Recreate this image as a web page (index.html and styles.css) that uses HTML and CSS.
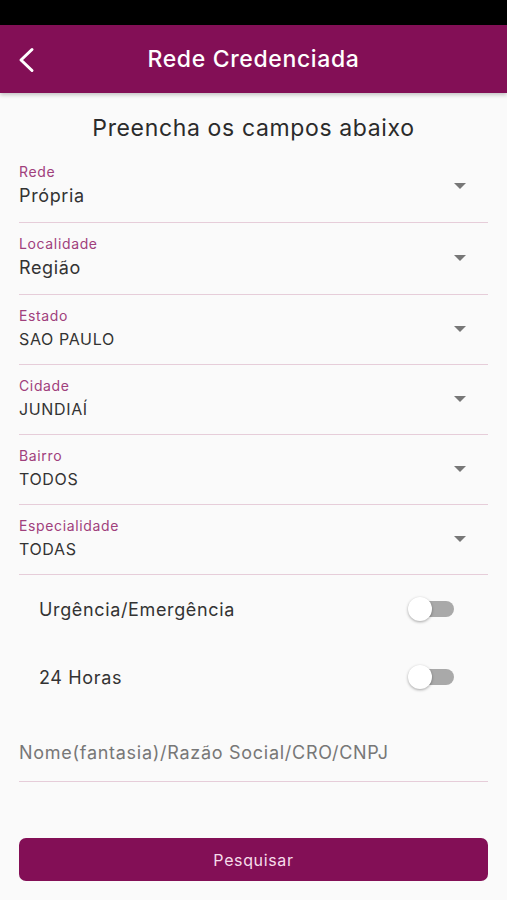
FILE: index.html
```html
<!DOCTYPE html>
<html>
<head>
  <meta charset="utf-8">
  <link rel="stylesheet" href="styles.css">
  <title>Rede Credenciada</title>
</head>
<body>
  <div class="status-bar"></div>
  <div class="app-bar">
    <button class="back-btn" aria-label="Voltar">
      <svg width="18" height="26" viewBox="0 0 18 26">
        <path d="M15 2.5 L4 13 L15 23.5" fill="none" stroke="#fff" stroke-width="3" stroke-linecap="round" stroke-linejoin="round"/>
      </svg>
    </button>
    <h1>Rede Credenciada</h1>
  </div>

  <div class="content">
    <h2 class="form-title">Preencha os campos abaixo</h2>

    <div class="select-field">
      <div class="select-text">
        <span class="field-label">Rede</span>
        <span class="field-value large">Própria</span>
      </div>
      <span class="select-arrow"></span>
    </div>

    <div class="select-field">
      <div class="select-text">
        <span class="field-label">Localidade</span>
        <span class="field-value large">Região</span>
      </div>
      <span class="select-arrow"></span>
    </div>

    <div class="select-field">
      <div class="select-text">
        <span class="field-label">Estado</span>
        <span class="field-value">SAO PAULO</span>
      </div>
      <span class="select-arrow"></span>
    </div>

    <div class="select-field">
      <div class="select-text">
        <span class="field-label">Cidade</span>
        <span class="field-value">JUNDIAÍ</span>
      </div>
      <span class="select-arrow"></span>
    </div>

    <div class="select-field">
      <div class="select-text">
        <span class="field-label">Bairro</span>
        <span class="field-value">TODOS</span>
      </div>
      <span class="select-arrow"></span>
    </div>

    <div class="select-field">
      <div class="select-text">
        <span class="field-label">Especialidade</span>
        <span class="field-value">TODAS</span>
      </div>
      <span class="select-arrow"></span>
    </div>

    <div class="switch-row">
      <span>Urgência/Emergência</span>
      <span class="switch"><span class="switch-track"></span><span class="switch-thumb"></span></span>
    </div>

    <div class="switch-row">
      <span>24 Horas</span>
      <span class="switch"><span class="switch-track"></span><span class="switch-thumb"></span></span>
    </div>

    <div class="text-field">
      <input type="text" placeholder="Nome(fantasia)/Razão Social/CRO/CNPJ">
    </div>

    <button class="search-btn">Pesquisar</button>
  </div>
</body>
</html>
```

FILE: styles.css
```css
body {
  margin: 0;
  padding: 0;
  background-color: #fafafa;
  font-family: Inter, "Noto Sans", sans-serif;
  letter-spacing: 0.04em;
  color: #333;
}

.status-bar {
  height: 25px;
  background-color: #000;
}

.app-bar {
  position: relative;
  display: flex;
  align-items: center;
  justify-content: center;
  height: 68px;
  background-color: #830f56;
  box-shadow: 0 2px 4px rgba(0, 0, 0, 0.22);
}

.app-bar h1 {
  margin: 0;
  color: #fff;
  font-size: 23px;
  font-weight: 500;
}

.back-btn {
  position: absolute;
  left: 17px;
  top: 22px;
  padding: 0;
  background: none;
  border: none;
  display: flex;
  cursor: pointer;
}

.content {
  padding: 0 19px;
}

.form-title {
  margin: 20px 0 8px;
  text-align: center;
  font-size: 23px;
  line-height: 30px;
  font-weight: 400;
  color: #2b2b2b;
}

.select-field {
  display: flex;
  align-items: center;
  padding: 13px 22px 14px 0;
  border-bottom: 1px solid #e6cdd9;
}

.select-text {
  flex: 1;
  display: flex;
  flex-direction: column;
}

.field-label {
  font-size: 14px;
  line-height: 16px;
  color: #a0407c;
}

.field-value {
  margin-top: 4px;
  font-size: 16px;
  line-height: 22px;
  color: #333;
}

.field-value.large {
  font-size: 18px;
  line-height: 24px;
}

.select-arrow {
  width: 0;
  height: 0;
  border-left: 6px solid transparent;
  border-right: 6px solid transparent;
  border-top: 6px solid #777;
}

.switch-row {
  display: flex;
  align-items: center;
  justify-content: space-between;
  height: 68px;
  padding: 0 34px 0 20px;
  font-size: 18px;
  color: #333;
}

.switch {
  position: relative;
  width: 46px;
  height: 24px;
}

.switch-track {
  position: absolute;
  right: 0;
  top: 4px;
  width: 40px;
  height: 16px;
  border-radius: 8px;
  background-color: #a9a9a9;
}

.switch-thumb {
  position: absolute;
  left: 0;
  top: 0;
  width: 24px;
  height: 24px;
  border-radius: 50%;
  background-color: #fff;
  box-shadow: 0 1px 3px rgba(0, 0, 0, 0.35);
}

.text-field {
  padding: 30px 0 16px;
  border-bottom: 1px solid #e6cdd9;
}

.text-field input {
  width: 100%;
  padding: 0;
  border: none;
  background: none;
  outline: none;
  font-family: Inter, "Noto Sans", sans-serif;
  letter-spacing: 0.04em;
  font-size: 18px;
  line-height: 24px;
  height: 24px;
  color: #333;
}

.text-field input::placeholder {
  color: #777;
}

.search-btn {
  display: block;
  width: 100%;
  height: 43px;
  margin-top: 56px;
  border: none;
  border-radius: 7px;
  background-color: #830f56;
  color: #f6dcea;
  font-family: Inter, "Noto Sans", sans-serif;
  letter-spacing: 0.04em;
  font-size: 16px;
  cursor: pointer;
}
```
